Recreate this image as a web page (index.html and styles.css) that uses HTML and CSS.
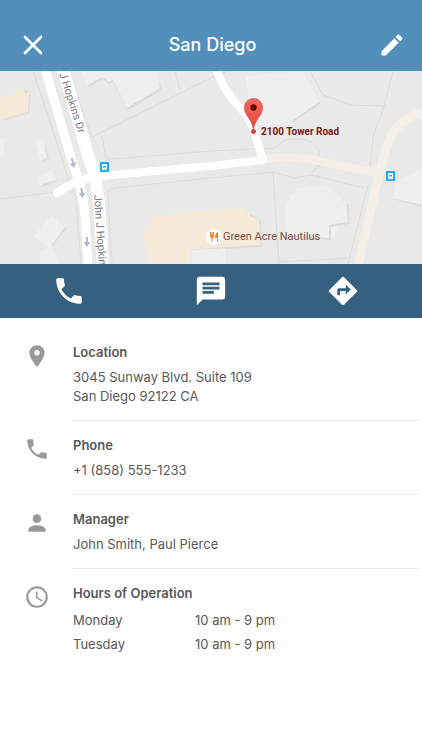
FILE: index.html
```
<!DOCTYPE html>
<html lang="en">
<head>
    <meta charset="UTF-8">
    <meta name="viewport" content="width=device-width, initial-scale=1.0">
    <title>San Diego</title>
    <link rel="stylesheet" href="styles.css">
</head>
<body>
    <header class="header">
        <button type="button" class="icon-btn" aria-label="Close">
            <svg class="header-icon" viewBox="0 0 28 28"><path d="M6 6l16 16M22 6L6 22" fill="none" stroke="currentColor" stroke-width="2.6" stroke-linecap="round"/></svg>
        </button>
        <h1>San Diego</h1>
        <button type="button" class="icon-btn" aria-label="Edit">
            <svg class="header-icon" viewBox="0 0 24 24"><path d="M3 17.25V21h3.75L17.81 9.94l-3.75-3.75L3 17.25zM20.71 7.04c.39-.39.39-1.02 0-1.41l-2.34-2.34c-.39-.39-1.02-.39-1.41 0l-1.83 1.83 3.75 3.75 1.83-1.83z"/></svg>
        </button>
    </header>

    <!-- Map -->
    <svg class="map" viewBox="0 0 422 193" preserveAspectRatio="xMidYMid slice" role="img" aria-label="Map of 2100 Tower Road">
        <defs>
            <linearGradient id="pin" x1="0" y1="0" x2="0" y2="1">
                <stop offset="0" stop-color="#f8685f"/>
                <stop offset="1" stop-color="#e8453c"/>
            </linearGradient>
            <g id="bus">
                <rect width="9" height="10" rx="1" fill="#1ba8ee"/>
                <path d="M2 2h5v5.500h-.5v1h-1v-1h-2v1h-1v-1H2z" fill="#fff"/>
                <path d="M3 4h3v1.500H3z" fill="#1ba8ee"/>
            </g>
            <path id="arrow" d="M-1 -5h2v5h2.500L0 5l-3.500-5H-1z" fill="#b3b7cd"/>
        </defs>
        <rect width="422" height="193" fill="#e9e9e9"/>

        <!-- parcel lines -->
        <g fill="none" stroke="#e0d9d5" stroke-width="1">
            <path d="M33 0L64 94L76 130L81 193M0 128L55 121"/>
            <path d="M68 0L92 66L211 7L228 0M175 0L180 19"/>
            <path d="M102 64L105 83Q106 89 112 88L211 80L274 77L285 69Q302 66 311 71L319 79V96"/>
            <path d="M311 2L323 24L351 34L384 35M393 0L384 35L373 66L370 96"/>
            <path d="M112 193L108 124Q108 117 114 117L211 107L273 101L294 107L311 104L364 117M311 104L318 94"/>
            <path d="M273 102L279 193M279 191L348 187M368 114L348 193"/>
        </g>

        <!-- buildings -->
        <g fill="#d9dbe0">
            <path d="M83 3L89 16L103 8L109 13L113 11L128 39L162 19L160 12z"/>
            <path d="M303 3L320 33L293 51L290 46z"/>
            <path d="M287 133L349 133V153L331 156V169L287 166z"/>
            <path d="M2 50L29 42L31 24L24 18zM42 91L49 88L45 72zM41 116L58 110L54 99zM51 177L67 157L60 151zM393 128L422 136V132z"/>
            <path d="M190 180L262 176L261 150L246 140z"/>
        </g>
        <g fill="#efefef">
            <path d="M80 0L88 14L102 6L109 11L113 9L127 37L160 17L157 0z"/>
            <path d="M246 5L303 0L319 31L293 49L262 58L249 33z"/>
            <path d="M296 117L327 114L330 118L333 118V122L337 122V126L341 126V130L346 131L348 151L329 154V167L286 164L285 131L290 129V124L296 122zM331 156L338 155L334 166L331 167z"/>
            <path d="M0 67L5 68L3 82L0 83zM35 71L43 68L47 87L41 90L38 80zM37 107L53 98L57 109L40 114zM52 144L65 156L50 176L33 166zM40 181L47 178L49 173L55 183L58 193H40zM396 110L422 98V134L393 127zM192 179L225 177V193H192z"/>
        </g>
        <g fill="#f5ead7">
            <path d="M0 27L16 22L17 18L23 16L25 22L29 22L28 41L0 49z"/>
            <path d="M145 156L150 153L152 145L211 139L246 137V141L250 141V145L259 149L261 174L211 177L190 179V193H150L143 166z"/>
        </g>

        <!-- roads -->
        <g fill="none" stroke="#f4f0e9" stroke-width="9">
            <path d="M266 88Q298 84 328 92L376 102" stroke-width="8"/>
            <path d="M424 42Q394 48 386 78L378 107L369 147L358 195"/>
        </g>
        <g fill="none" stroke="#fff" stroke-linejoin="round" stroke-linecap="round">
            <path d="M45 -2L72 90Q83 118 85 145L88 197" stroke-width="9"/>
            <path d="M63 -2L88 84Q98 110 100 144L103 197" stroke-width="12"/>
            <path d="M57 122Q74 109 100 105L211 95L263 89L253 57Q248 43 234 30Q223 17 216 -2" stroke-width="8"/>
        </g>
        <use href="#arrow" transform="translate(73 92) rotate(-15)"/>
        <use href="#arrow" transform="translate(82 122) rotate(-8)"/>
        <use href="#arrow" transform="translate(87 171)"/>

        <!-- labels and markers -->
        <text class="street" transform="translate(59 3) rotate(72)">J Hopkins Dr</text>
        <text class="street" transform="translate(94 124) rotate(86)">John J Hopkins</text>
        <use href="#bus" x="100" y="91"/>
        <use href="#bus" x="386" y="100"/>
        <circle cx="214" cy="166" r="8" fill="#fff"/>
        <path d="M210 161v4q0 2 1.500 2v4h1v-4q1.500 0 1.500-2v-4h-1v3h-.5v-3h-1v3h-.5v-3zM218 161q-3 1-3 6h2v4h1z" fill="#f08030"/>
        <text class="place" x="223" y="169">Green Acre Nautilus</text>
        <circle cx="253.500" cy="60.500" r="2.500" fill="#d9443b"/>
        <path d="M253.500 59C252.500 48 244.500 45 244.500 36.500a9 9 0 0 1 18 0C262.500 45 254.500 48 253.500 59z" fill="url(#pin)" stroke="#c9433b" stroke-width=".7"/>
        <circle cx="253.500" cy="36.500" r="3.200" fill="#5c0f0c"/>
        <text class="address" x="261" y="64">2100 Tower Road</text>
    </svg>

    <nav class="actions">
        <button type="button" class="icon-btn" aria-label="Call">
            <svg class="action-icon" viewBox="0 0 24 24"><path d="M6.620 10.790c1.440 2.830 3.760 5.140 6.590 6.590l2.200-2.200c.27-.27.67-.36 1.020-.24 1.120.37 2.330.57 3.570.57.55 0 1 .45 1 1V20c0 .55-.45 1-1 1-9.390 0-17-7.610-17-17 0-.55.45-1 1-1h3.500c.55 0 1 .45 1 1 0 1.250.2 2.450.57 3.570.11.35.03.74-.25 1.020l-2.200 2.200z"/></svg>
        </button>
        <button type="button" class="icon-btn" aria-label="Message">
            <svg class="action-icon" viewBox="0 0 24 24"><path d="M20 2H4c-1.100 0-1.990.9-1.990 2L2 22l4-4h14c1.100 0 2-.9 2-2V4c0-1.100-.9-2-2-2zM6 9h12v2H6V9zm8 5H6v-2h8v2zm4-6H6V6h12v2z"/></svg>
        </button>
        <button type="button" class="icon-btn" aria-label="Directions">
            <svg class="action-icon" viewBox="0 0 24 24"><path d="M21.710 11.290l-9-9a.996.996 0 0 0-1.410 0l-9 9a.996.996 0 0 0 0 1.410l9 9c.39.39 1.020.39 1.410 0l9-9a.996.996 0 0 0 0-1.410zM14 14.500V12h-4v3H8v-4c0-.55.45-1 1-1h5V7.500l3.500 3.500-3.500 3.500z"/></svg>
        </button>
    </nav>

    <main class="details">
        <section class="row">
            <svg class="row-icon" viewBox="0 0 24 24"><path d="M12 2C8.130 2 5 5.130 5 9c0 5.250 7 13 7 13s7-7.750 7-13c0-3.870-3.130-7-7-7zm0 9.500a2.500 2.500 0 0 1 0-5 2.500 2.500 0 0 1 0 5z"/></svg>
            <div class="row-body">
                <h2>Location</h2>
                <p>3045 Sunway Blvd. Suite 109<br>San Diego 92122 CA</p>
            </div>
        </section>
        <section class="row">
            <svg class="row-icon" viewBox="0 0 24 24"><path d="M6.620 10.790c1.440 2.830 3.760 5.140 6.590 6.590l2.200-2.200c.27-.27.67-.36 1.020-.24 1.120.37 2.330.57 3.570.57.55 0 1 .45 1 1V20c0 .55-.45 1-1 1-9.390 0-17-7.610-17-17 0-.55.45-1 1-1h3.500c.55 0 1 .45 1 1 0 1.250.2 2.450.57 3.570.11.35.03.74-.25 1.020l-2.200 2.200z"/></svg>
            <div class="row-body">
                <h2>Phone</h2>
                <p>+1 (858) 555-1233</p>
            </div>
        </section>
        <section class="row">
            <svg class="row-icon" viewBox="0 0 24 24"><path d="M12 12c2.210 0 4-1.790 4-4s-1.790-4-4-4-4 1.790-4 4 1.790 4 4 4zm0 2c-2.670 0-8 1.340-8 4v2h16v-2c0-2.660-5.330-4-8-4z"/></svg>
            <div class="row-body">
                <h2>Manager</h2>
                <p>John Smith, Paul Pierce</p>
            </div>
        </section>
        <section class="row">
            <svg class="row-icon" viewBox="0 0 24 24"><path d="M11.990 2C6.470 2 2 6.480 2 12s4.470 10 9.990 10C17.520 22 22 17.520 22 12S17.520 2 11.990 2zM12 20a8 8 0 1 1 0-16 8 8 0 0 1 0 16zM12.500 7H11v6l5.250 3.150.75-1.230-4.500-2.670z"/></svg>
            <div class="row-body">
                <h2>Hours of Operation</h2>
                <table class="hours">
                    <tr><th scope="row">Monday</th><td>10 am - 9 pm</td></tr>
                    <tr><th scope="row">Tuesday</th><td>10 am - 9 pm</td></tr>
                </table>
            </div>
        </section>
    </main>
</body>
</html>
```
FILE: styles.css
```
* {
    margin: 0;
    padding: 0;
    box-sizing: border-box;
}
body {
    background: #fefefe;
    color: #58585a;
    font-family: Inter, sans-serif;
    font-size: 13px;
}
svg {
    display: block;
    fill: currentColor;
}
.icon-btn {
    display: flex;
    justify-content: center;
    align-items: center;
    border: none;
    background: none;
    color: white;
    cursor: pointer;
}

/* Header */
.header {
    display: flex;
    justify-content: space-between;
    align-items: center;
    padding: 31px 16px 12px 19px;
    background: #528fbb;
    color: white;
}
.header h1 {
    font-size: 18px;
    font-weight: 500;
    line-height: 28px;
}
.header-icon {
    width: 28px;
    height: 28px;
}

.map {
    width: 100%;
    height: 193px;
}
.map text {
    font-family: Roboto, sans-serif;
    font-size: 11px;
}
.map .street {
    fill: #808080;
}
.map .place {
    fill: #7d4f49;
}
.map .address {
    fill: #7e1716;
    font-size: 10px;
    font-weight: bold;
}

/* Call, message, directions */
.actions {
    display: grid;
    grid-template-columns: 23fr 24fr 20fr;
    padding: 10px 19px 10px 0;
    background: #35607f;
}
.action-icon {
    width: 34px;
    height: 34px;
}

/* Details */
.details {
    padding-top: 10px;
}
.row {
    display: flex;
    padding: 0 3px 0 24px;
}
.row-icon {
    flex: none;
    width: 26px;
    height: 26px;
    margin: 15px 22px 0 0;
    color: #999;
}
.row-body {
    flex: 1;
    padding: 12px 0 14px 1px;
    border-bottom: 1px solid #ececec;
}
.row:last-child .row-body {
    border-bottom: none;
}
.row h2 {
    font-size: 13px;
    font-weight: 600;
    line-height: 24px;
}
.row p {
    margin-top: 4px;
    line-height: 19px;
}
.hours {
    margin-top: 3px;
    border-collapse: collapse;
    line-height: 24px;
    text-align: left;
}
.hours th {
    width: 122px;
    font-weight: normal;
}
```
